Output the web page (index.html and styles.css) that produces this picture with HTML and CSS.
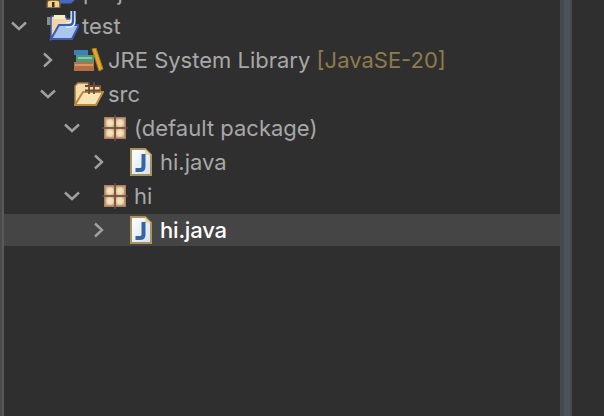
FILE: index.html
```html
<!DOCTYPE html>
<html lang="en">
<head>
<meta charset="utf-8">
<title>Package Explorer</title>
<link rel="stylesheet" href="styles.css">
</head>
<body>
<svg class="defs" width="0" height="0" aria-hidden="true">
  <defs>
    <radialGradient id="pk"><stop offset="0" stop-color="#f5e8c4"/><stop offset="0.7" stop-color="#ecd9ac"/><stop offset="1" stop-color="#cfae88"/></radialGradient>
    <linearGradient id="jf" x1="0" y1="0" x2="1" y2="1"><stop offset="0" stop-color="#ffffff"/><stop offset="1" stop-color="#d5e0f2"/></linearGradient>
    <symbol id="chev-r" viewBox="0 0 16 16"><path d="M4 1.500 L11 8 L4 14.500" fill="none" stroke="#a0a0a0" stroke-width="2.400"/></symbol>
    <symbol id="chev-d" viewBox="0 0 16 16"><path d="M1 4.500 L8 11 L15 4.500" fill="none" stroke="#a0a0a0" stroke-width="2.400"/></symbol>
    <symbol id="pkg" viewBox="0 0 26 26">
      <rect x="2" y="2" width="22" height="22" fill="#ad7f66"/>
      <rect x="3.500" y="3.500" width="9" height="9" fill="url(#pk)"/><rect x="13.500" y="3.500" width="9" height="9" fill="url(#pk)"/>
      <rect x="3.500" y="13.500" width="9" height="9" fill="url(#pk)"/><rect x="13.500" y="13.500" width="9" height="9" fill="url(#pk)"/>
      <path d="M13 0 V26 M0 13 H26" stroke="#6e4a3a" stroke-width="1.600"/>
    </symbol>
    <symbol id="jfile" viewBox="0 0 22 28">
      <path d="M1 1 H15 L21 7 V27 H1 Z" fill="url(#jf)" stroke="#a8935a" stroke-width="2"/>
      <path d="M15 1 V7 H21 Z" fill="#e8d9a8"/>
      <path d="M13.500 6 V18.500 Q13.500 22 10 22 H5.500" fill="none" stroke="#37659e" stroke-width="4"/>
    </symbol>
  </defs>
</svg>
<main class="window">
  <div class="edge"></div>
  <section class="tree">
    <div class="row row-top">
      <svg class="icon" width="30" height="32" viewBox="0 0 30 32">
        <path d="M1 32 V27 Q1 24 4 24 H11 Q14 24 14 27 V32 Z" fill="#f0d28c" stroke="#6b5530" stroke-width="1.500"/>
        <rect x="6" y="26" width="2.500" height="5" fill="#3f311a"/>
        <path d="M14 24 H29 L25 27.500 H14 Z" fill="#4668c0"/>
      </svg>
      <span class="label">project</span>
    </div>
    <div class="row d1">
      <svg class="twist"><use href="#chev-d"/></svg>
      <svg class="icon" width="32" height="30" viewBox="0 0 32 30">
        <path d="M0 6 H6 V14 H0 Z" fill="#8d8d8d"/>
        <path d="M4 28 V7 Q4 5 6 5 H18 L20 8 H28 V14 H12 Z" fill="#eed7a3" stroke="#3f5bb2" stroke-width="1.500"/>
        <rect x="7" y="4" width="11" height="4" fill="#f7ecc9"/>
        <path d="M4 28 L12 14 H32 L25 28 Z" fill="#a9c6ef" stroke="#3f5bb2" stroke-width="2"/>
        <path d="M26 0 V10 Q26 14 22 14 H19" fill="none" stroke="#ffffff" stroke-width="5"/>
        <path d="M26 0 V10 Q26 14 22 14 H19" fill="none" stroke="#2f62ad" stroke-width="2.500"/>
      </svg>
      <span class="label">test</span>
    </div>
    <div class="row d2">
      <svg class="twist"><use href="#chev-r"/></svg>
      <svg class="icon" width="30" height="24" viewBox="0 0 30 24">
        <rect x="0" y="2" width="14" height="5" fill="#3f7fb8"/>
        <rect x="2" y="7" width="18" height="7" fill="#4e9a7c"/><rect x="4" y="9" width="14" height="2" fill="#8cc5a0"/>
        <rect x="0" y="14" width="20" height="9" fill="#b56f45"/><rect x="1" y="16" width="18" height="2" fill="#d9986a"/>
        <path d="M18 1 L22 0 L29 21 L25 23 Z" fill="#e0a62f" stroke="#a77720" stroke-width="1"/>
      </svg>
      <span class="label">JRE System Library <span class="tag">[JavaSE-20]</span></span>
    </div>
    <div class="row d2">
      <svg class="twist"><use href="#chev-d"/></svg>
      <svg class="icon" width="30" height="24" viewBox="0 0 30 24">
        <path d="M1 23 V4 L4 1 H14 L16 4 H26 V10 H10 Z" fill="#f2dcaa" stroke="#a87d3e" stroke-width="1.500"/>
        <path d="M1 23 L9 10 H29 L22 23 Z" fill="#f7e5b8" stroke="#b88a46" stroke-width="2"/>
        <path d="M11 4 H26 M11 8.500 H26 M15 0 V12 M20 0 V12" stroke="#6e4a3a" stroke-width="1.800"/>
      </svg>
      <span class="label">src</span>
    </div>
    <div class="row d3">
      <svg class="twist"><use href="#chev-d"/></svg>
      <svg class="icon" width="26" height="26"><use href="#pkg"/></svg>
      <span class="label">(default package)</span>
    </div>
    <div class="row d4">
      <svg class="twist"><use href="#chev-r"/></svg>
      <svg class="icon" width="22" height="28"><use href="#jfile"/></svg>
      <span class="label">hi.java</span>
    </div>
    <div class="row d3">
      <svg class="twist"><use href="#chev-d"/></svg>
      <svg class="icon" width="26" height="26"><use href="#pkg"/></svg>
      <span class="label">hi</span>
    </div>
    <div class="row d4 selected">
      <svg class="twist"><use href="#chev-r"/></svg>
      <svg class="icon" width="22" height="28"><use href="#jfile"/></svg>
      <span class="label">hi.java</span>
    </div>
  </section>
  <div class="scrollbar"><div class="thumb"></div></div>
  <div class="side"></div>
</main>
</body>
</html>
```
FILE: styles.css
```css
* { box-sizing: border-box; }
html, body { margin: 0; height: 100%; }
body { background: #2f2f2f; overflow: hidden; font-family: "Inter", "Liberation Sans", sans-serif; }
.defs { position: absolute; }
.window { display: flex; height: 416px; width: 604px; }
.edge { width: 4px; background: #59595b; border-left: 2px solid #4a4a4c; }
.tree { width: 556px; background: #2f2f2f; display: flex; flex-direction: column; gap: 2px; margin-top: -24px; }
.row { height: 32px; display: flex; align-items: center; font-size: 22px; color: #a8a8a8; }
.row-top { padding-left: 42px; }
.d1 { padding-left: 7px; }
.d2 { padding-left: 36px; }
.d3 { padding-left: 60px; }
.d4 { padding-left: 87px; }
.twist { width: 16px; height: 16px; flex: none; }
.d1 .twist { margin-right: 20px; }
.d2 .twist { margin-right: 18px; }
.d3 .twist { margin-right: 22px; }
.d4 .twist { margin-right: 23px; }
.icon { flex: none; }
.d1 .icon { margin-right: 3px; }
.d2 .icon { margin-right: 4px; }
.d3 .icon { margin-right: 6px; }
.d4 .icon { margin-right: 8px; }
.row-top .icon { margin-right: 7px; }
.tag { color: #8e7c4c; }
.selected { background: #454545; color: #ffffff; font-weight: 500; letter-spacing: -0.2px; }
.scrollbar { width: 12px; background: #454a4d; padding: 0 2px 0 4px; }
.thumb { height: 100%; background: #4c5256; }
.side { flex: 1; background: #2f2f2f; }
```
